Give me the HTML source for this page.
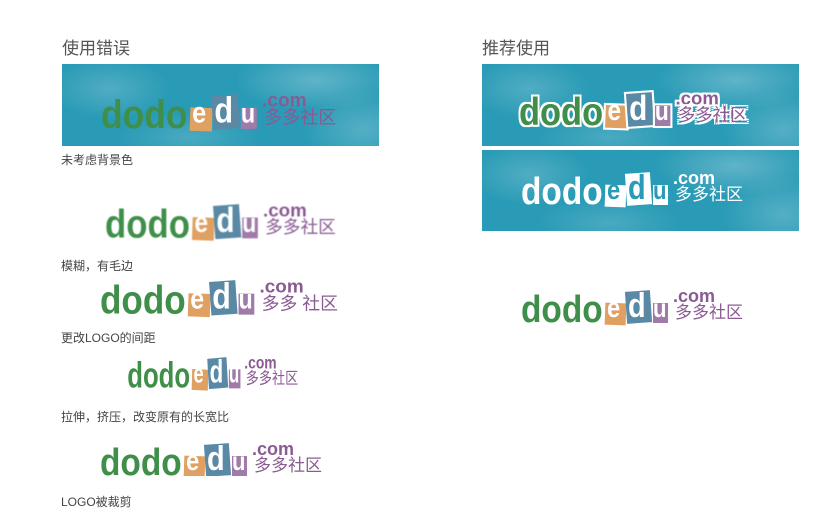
<!DOCTYPE html>
<html><head><meta charset="utf-8">
<style>
*{margin:0;padding:0;box-sizing:border-box}
body{width:818px;height:527px;background:#fff;position:relative;overflow:hidden;font-family:"Liberation Sans","Noto Sans CJK SC",sans-serif}
.h{position:absolute;font-size:17px;color:#555}
.l{position:absolute;font-size:12px;color:#444}
.bn{position:absolute;background:
radial-gradient(ellipse 60px 30px at 15% 30%,rgba(255,255,255,.18),transparent),
radial-gradient(ellipse 80px 30px at 80% 20%,rgba(255,255,255,.25),transparent),
radial-gradient(ellipse 70px 25px at 40% 90%,rgba(255,255,255,.15),transparent),
radial-gradient(ellipse 60px 40px at 95% 80%,rgba(255,255,255,.2),transparent),
#2a9bb6;overflow:hidden}
.lg{position:absolute;width:226px;height:38px;transform-origin:0 0}
.lg>*{position:absolute}
.dd{left:-1px;top:1px;font-size:38px;font-weight:bold;color:#3f8f4a;line-height:38px;transform:scaleX(0.88);transform-origin:0 0;letter-spacing:0}
.be{left:83px;top:13px;width:21px;height:22px;background:#dfa062;transform:rotate(2deg)}
.bd{left:104px;top:1px;width:25px;height:32px;background:#5a89a6;transform:rotate(-4deg)}
.bu{left:131px;top:13px;width:15px;height:20px;background:#a07aa8}
.lt{font-weight:bold;color:#fff}
.te{left:85px;top:4px;font-size:28px;line-height:28px;transform:scaleX(.85);transform-origin:0 0}
.td{left:106px;top:-1px;font-size:34px;line-height:34px;transform:scaleX(.85);transform-origin:0 0}
.tu{left:131px;top:5px;font-size:26px;line-height:26px;transform:scaleX(.85);transform-origin:0 0}
.cm{left:151px;top:-4px;font-size:18px;font-weight:bold;color:#8a5a92;line-height:20px}
.cn{left:153px;top:13px;font-size:17px;color:#8a5a92;line-height:20px}
.w .dd,.w .cm,.w .cn{color:#fff}
.o .dd,.o .cm,.o .cn{text-shadow:2px 0 #fff,-2px 0 #fff,0 2px #fff,0 -2px #fff,2px 2px #fff,-2px -2px #fff,2px -2px #fff,-2px 2px #fff}
.o .be,.o .bd,.o .bu{box-shadow:0 0 0 2px #fff}
</style></head><body>
<div class="h" style="left:62px;top:34px">使用错误</div>
<div class="h" style="left:482px;top:34px">推荐使用</div>

<div class="bn" style="left:62px;top:64px;width:317px;height:82px"></div>
<div class="lg" style="left:102px;top:94px;transform:scale(1.06)"><span class="dd">dodo</span><span class="be"></span><span class="bd"></span><span class="bu"></span><span class="lt te">e</span><span class="lt td">d</span><span class="lt tu">u</span><span class="cm">.com</span><span class="cn">多多社区</span></div>
<div class="l" style="left:61px;top:151px">未考虑背景色</div>

<div class="lg" style="left:106px;top:204px;transform:scale(1.04);filter:blur(0.6px)"><span class="dd">dodo</span><span class="be"></span><span class="bd"></span><span class="bu"></span><span class="lt te">e</span><span class="lt td">d</span><span class="lt tu">u</span><span class="cm">.com</span><span class="cn">多多社区</span></div>
<div class="l" style="left:61px;top:257px">模糊，有毛边</div>

<div class="lg" style="left:101px;top:280px;transform:scale(1.05)"><span class="dd">dodo</span><span class="be"></span><span class="bd"></span><span class="bu"></span><span class="lt te">e</span><span class="lt td">d</span><span class="lt tu">u</span><span class="cm">.com</span><span class="cn">多多&nbsp;社区</span></div>
<div class="l" style="left:61px;top:329px">更改LOGO的间距</div>

<div class="lg" style="left:128px;top:357px;transform:scale(0.77,0.95)"><span class="dd">dodo</span><span class="be"></span><span class="bd"></span><span class="bu"></span><span class="lt te">e</span><span class="lt td">d</span><span class="lt tu">u</span><span class="cm">.com</span><span class="cn">多多社区</span></div>
<div class="l" style="left:61px;top:408px">拉伸，挤压，改变原有的长宽比</div>

<div style="position:absolute;left:101px;top:440px;width:240px;height:36px;overflow:hidden">
<div class="lg" style="left:0;top:3px"><span class="dd">dodo</span><span class="be"></span><span class="bd"></span><span class="bu"></span><span class="lt te">e</span><span class="lt td">d</span><span class="lt tu">u</span><span class="cm">.com</span><span class="cn">多多社区</span></div></div>
<div class="l" style="left:61px;top:493px">LOGO被裁剪</div>

<div class="bn" style="left:482px;top:64px;width:317px;height:82px"></div>
<div class="lg o" style="left:520px;top:92px;transform:scale(1.03)"><span class="dd">dodo</span><span class="be"></span><span class="bd"></span><span class="bu"></span><span class="lt te">e</span><span class="lt td">d</span><span class="lt tu">u</span><span class="cm">.com</span><span class="cn">多多社区</span></div>

<div class="bn" style="left:482px;top:150px;width:317px;height:81px"></div>
<div class="lg w" style="left:522px;top:172px"><span class="dd">dodo</span><span class="be" style="background:#fff"></span><span class="bd" style="background:#fff"></span><span class="bu" style="background:#fff"></span><span class="lt te" style="color:#2a9bb6">e</span><span class="lt td" style="color:#2a9bb6">d</span><span class="lt tu" style="color:#2a9bb6">u</span><span class="cm">.com</span><span class="cn">多多社区</span></div>

<div class="lg" style="left:522px;top:290px"><span class="dd">dodo</span><span class="be"></span><span class="bd"></span><span class="bu"></span><span class="lt te">e</span><span class="lt td">d</span><span class="lt tu">u</span><span class="cm">.com</span><span class="cn">多多社区</span></div>
</body></html>
